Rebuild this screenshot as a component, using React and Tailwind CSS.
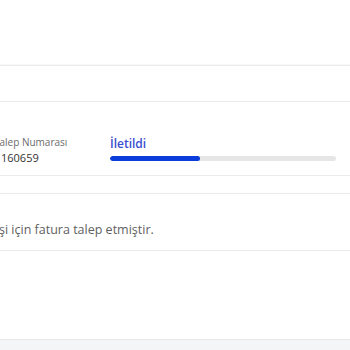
import React from "react";

export default function App() {
  return (
    <div className="w-[350px] h-[350px] overflow-hidden bg-white font-['Open_Sans',sans-serif]">
      {/* page header area */}
      <div className="h-[65px] border-b border-[#f7f7f7]" />
      <div className="h-[37px] border-t border-b border-[#ececec]" />

      {/* request row */}
      <div className="h-[74px] border-b border-[#ececec] flex items-start pt-[34px]">
        <div className="w-[116px] shrink-0 ml-[-6px]">
          <div className="text-[10px] leading-[13px] text-[#6b6b6b]">Talep Numarası</div>
          <div className="text-[11px] leading-[16px] text-[#333] pl-[7px] mt-[1px]">160659</div>
        </div>
        <div className="flex-1 pr-[14px]">
          <div className="text-[12px] leading-[16px] font-semibold text-[#3a4fd1]">İletildi</div>
          <div className="mt-[4px] h-[5px] rounded-full bg-[#e6e6e6] overflow-hidden">
            <div className="h-full w-[40%] rounded-full bg-[#0a3ddb]" />
          </div>
        </div>
      </div>

      <div className="h-[17px]" />

      {/* message */}
      <div className="h-[58px] border-t border-b border-[#ececec] pt-[28px]">
        <p className="text-[12.5px] leading-[16px] text-[#5f5f5f] ml-[-1px] whitespace-nowrap">
          şi için fatura talep etmiştir.
        </p>
      </div>

      <div className="h-[89px] border-b border-[#e8e8e8]" />
      <div className="h-[20px] bg-[#f4f5f7]" />
    </div>
  );
}
